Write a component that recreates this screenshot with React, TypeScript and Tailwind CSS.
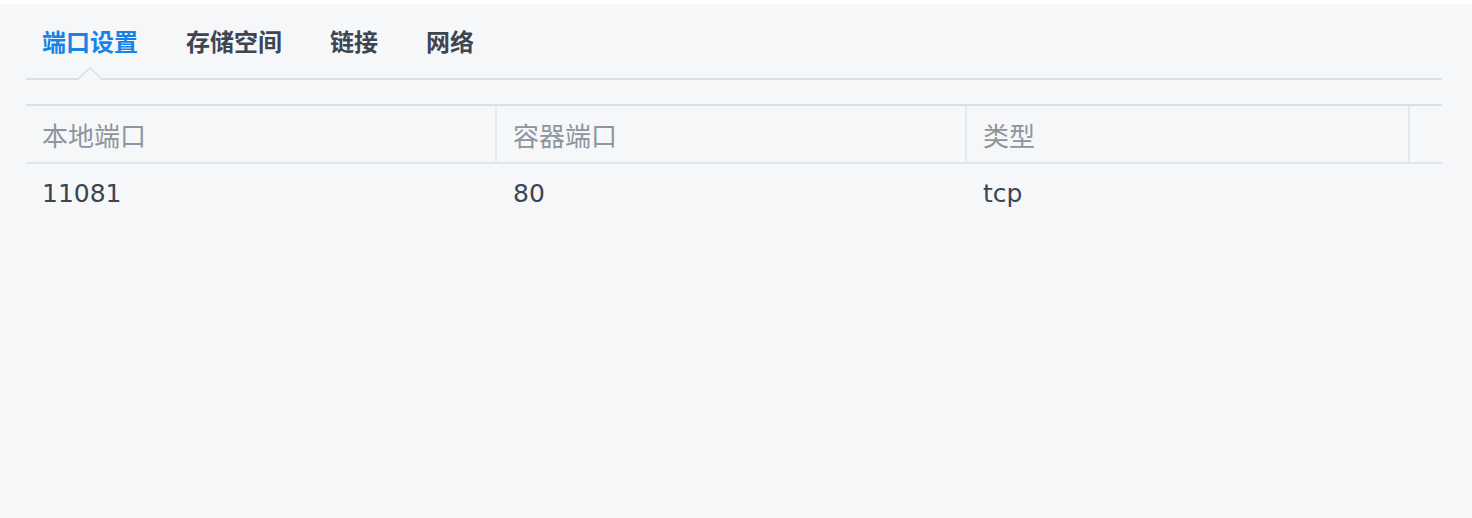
import React from "react";

const font = { fontFamily: '"Noto Sans", "Noto Sans CJK SC", sans-serif' };
const dataFont = { fontFamily: '"DejaVu Sans", "Noto Sans CJK SC", sans-serif' };

export default function App() {
  const tabs = ["端口设置", "存储空间", "链接", "网络"];
  return (
    <div
      className="w-[1472px] h-[518px] bg-[#f5f7f9] border-t-4 border-white pl-[26px] pr-[30px] overflow-hidden"
      style={font}
    >
      <div className="relative flex items-center gap-[48px] pl-[16px] pt-[1px] h-[76px] border-b-2 border-[#d6e0ea]">
        {tabs.map((t, i) => (
          <div
            key={t}
            className={
              i === 0
                ? "text-[24px] font-bold text-[#1a82e4] leading-none"
                : "text-[24px] font-bold text-[#3c4551] leading-none"
            }
          >
            {t}
          </div>
        ))}
        <svg
          className="absolute left-[52px] bottom-[-2px]"
          width="24"
          height="13"
          viewBox="0 0 24 13"
        >
          <polygon points="0,13 12,1 24,13" fill="#f5f7f9" />
          <polyline
            points="0,12 12,1 24,12"
            fill="none"
            stroke="#d6e0ea"
            strokeWidth="1.5"
          />
        </svg>
      </div>
      <div className="mt-[24px] border-t-2 border-[#d6e0ea]">
        <div className="flex h-[58px] border-b-2 border-[#dfe6ee] text-[26px] text-[#8e959d] leading-none">
          <div className="w-[471px] flex items-center pl-[16px] pt-[4px] border-r-2 border-[#e3e9ef]">本地端口</div>
          <div className="w-[470px] flex items-center pl-[16px] pt-[4px] border-r-2 border-[#e3e9ef]">容器端口</div>
          <div className="w-[443px] flex items-center pl-[16px] pt-[4px] border-r-2 border-[#e3e9ef]">类型</div>
          <div className="flex-1" />
        </div>
        <div className="flex h-[58px] text-[25px] text-[#3b4552] leading-none" style={dataFont}>
          <div className="w-[471px] flex items-center pl-[16px]">11081</div>
          <div className="w-[470px] flex items-center pl-[16px]">80</div>
          <div className="w-[443px] flex items-center pl-[16px]">tcp</div>
          <div className="flex-1" />
        </div>
      </div>
    </div>
  );
}
